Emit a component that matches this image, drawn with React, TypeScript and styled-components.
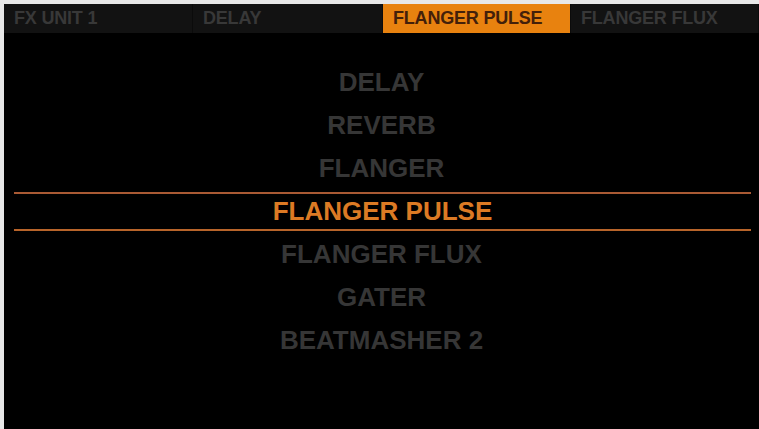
import { createGlobalStyle, styled } from "styled-components";

const GlobalStyle = createGlobalStyle`
  * {
    box-sizing: border-box;
  }

  html,
  body {
    margin: 0;
    padding: 0;
    background: #e8e8e8;
    font-family: "Liberation Sans", Arial, sans-serif;
  }
`;

const tabs = ["FX UNIT 1", "DELAY", "FLANGER PULSE", "FLANGER FLUX"];
const effects = [
  "DELAY",
  "REVERB",
  "FLANGER",
  "FLANGER PULSE",
  "FLANGER FLUX",
  "GATER",
  "BEATMASHER 2",
];
const activeTab = 2;
const selected = 3;

const App = (): JSX.Element => {
  return (
    <Page>
      <GlobalStyle />
      <Screen>
        <TabBar>
          {tabs.map((tab, index) => (
            <Tab key={tab} $active={index === activeTab}>
              {tab}
            </Tab>
          ))}
        </TabBar>
        <EffectList>
          {effects.map((name, index) => (
            <EffectRow key={name} $selected={index === selected}>
              {name}
            </EffectRow>
          ))}
        </EffectList>
      </Screen>
    </Page>
  );
};

const Page = styled.div`
  width: 759px;
  height: 429px;
  padding: 4px 0 0 4px;
  background: #e8e8e8;
  overflow: hidden;
`;

const Screen = styled.div`
  width: 100%;
  height: 100%;
  background: #000;
  display: flex;
  flex-direction: column;
`;

const TabBar = styled.div`
  display: grid;
  grid-template-columns: 189px 190px 188px 1fr;
  height: 29px;
  background: #121212;
`;

const Tab = styled.div<{ $active: boolean }>`
  display: flex;
  align-items: center;
  padding-left: 10px;
  font-size: 18px;
  font-weight: 700;
  letter-spacing: -0.2px;
  white-space: nowrap;
  color: ${(p) => (p.$active ? "#43200a" : "#383838")};
  background: ${(p) => (p.$active ? "#e8820f" : "transparent")};
  border-right: 1px solid #0b0b0b;
`;

const EffectList = styled.div`
  display: flex;
  flex-direction: column;
  padding-top: 28px;
`;

const EffectRow = styled.div<{ $selected: boolean }>`
  display: flex;
  align-items: center;
  justify-content: center;
  height: ${(p) => (p.$selected ? "39px" : "43px")};
  margin: ${(p) => (p.$selected ? "2px 8px 2px 10px" : "0")};
  border-top: ${(p) => (p.$selected ? "2px solid #a95a34" : "none")};
  border-bottom: ${(p) => (p.$selected ? "2px solid #b8642a" : "none")};
  font-size: 26px;
  font-weight: 700;
  color: ${(p) => (p.$selected ? "#dc7a24" : "#363636")};
  white-space: nowrap;
`;

export default App;
